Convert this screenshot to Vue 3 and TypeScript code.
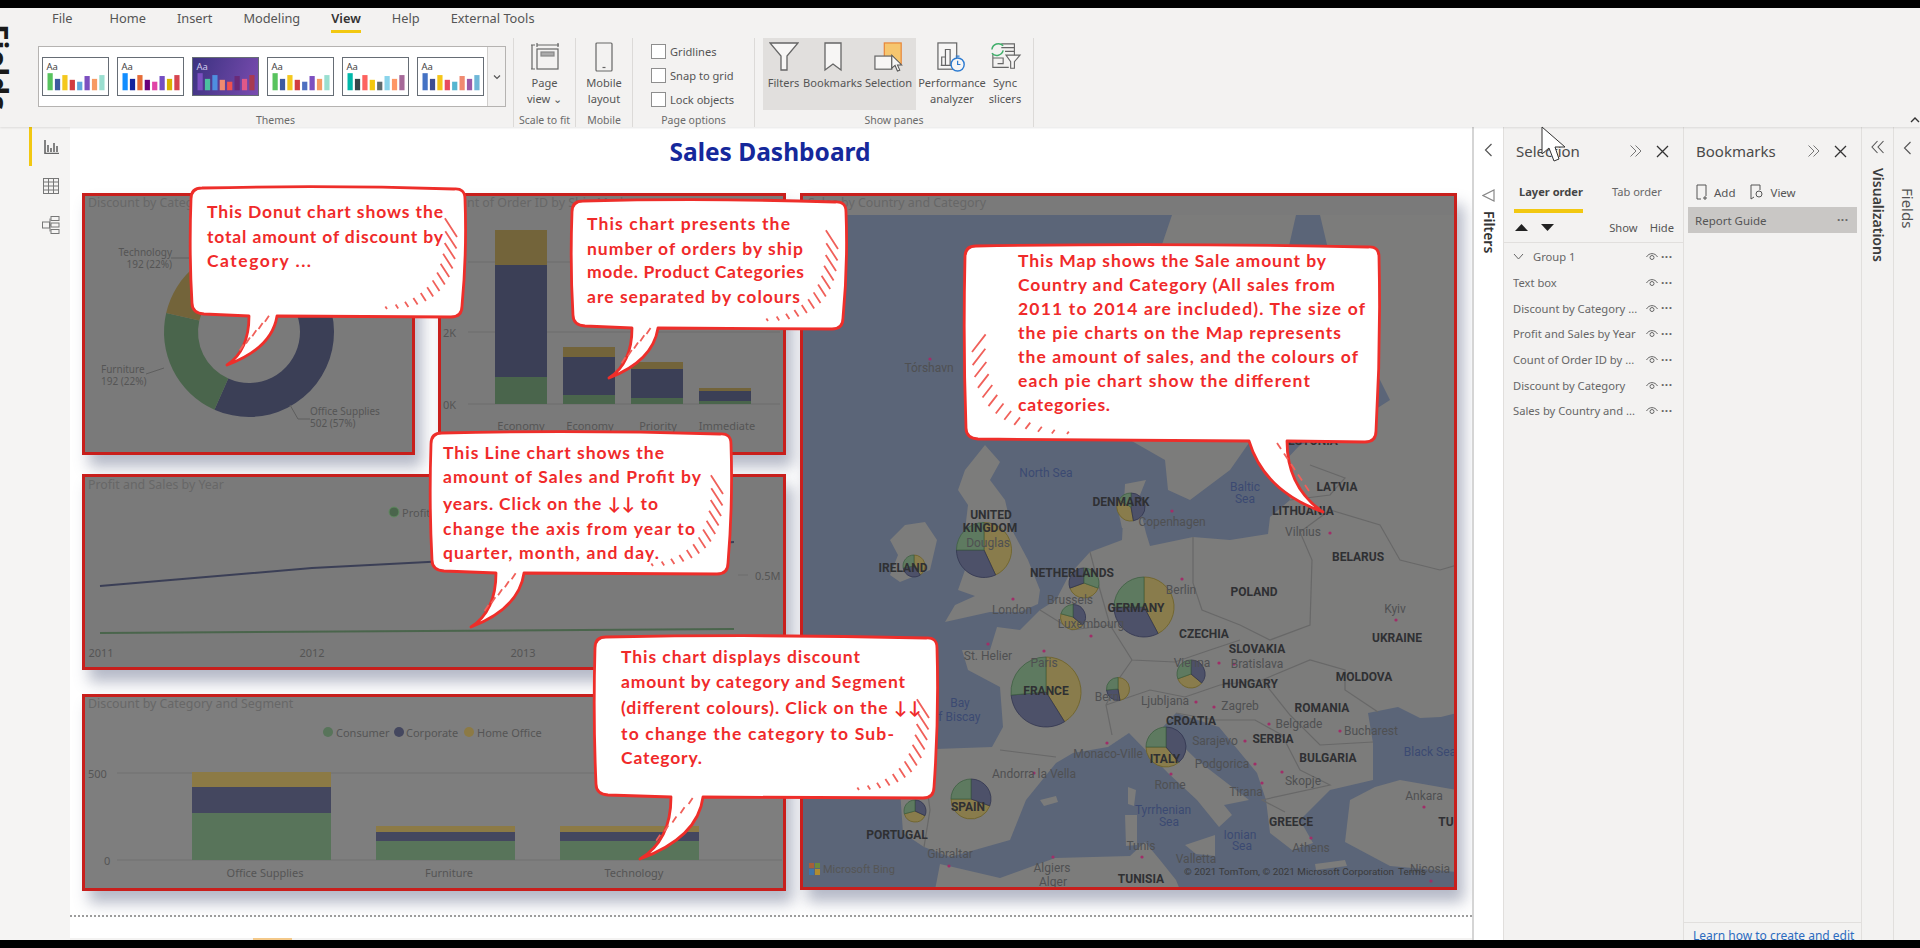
<script setup lang="ts">
interface Label { t: string; x: number; y: number; k: 'c' | 'p' | 'w'; s?: number }
interface Slice { from: number; to: number; color: string; edge: string }
interface Callout {
  x1: number; y1: number; x2: number; y2: number
  b1: number; b2: number; tx: number; ty: number
  textX: number
  hatchLeft?: boolean
  lines: { t: string; y: number; w: number }[]
}

const tabs = ['File', 'Home', 'Insert', 'Modeling', 'View', 'Help', 'External Tools']

const themes = [
  { dark: false, bars: ['#58c35e', '#3e5aa0', '#f4c81e', '#d23c40', '#5fa8dc', '#7c4fc0', '#f79a62', '#9adfd0'] },
  { dark: false, bars: ['#118dff', '#12239e', '#e66c37', '#6b007b', '#e044a7', '#744ec2', '#d9b300', '#d64550'] },
  { dark: true, bars: ['#7b4fc0', '#4cc0a0', '#4f8fe0', '#f08a70', '#f05050', '#6a2a78', '#e05888', '#a83a50'] },
  { dark: false, bars: ['#58c35e', '#3e5aa0', '#f4c81e', '#d23c40', '#4e6fc0', '#7c4fc0', '#f79a62', '#9adfd0'] },
  { dark: false, bars: ['#01b8aa', '#374649', '#fd625e', '#f2c80f', '#5f6b6d', '#8ad4eb', '#fe9666', '#a66999'] },
  { dark: false, bars: ['#4472c4', '#3f4e90', '#f5c518', '#e84a5f', '#55b5d0', '#f08a70', '#9b59a8', '#6fb7d8'] },
]
const barHeights = [18, 12, 16, 11, 9, 15, 12, 16]

const layers = [
  'Text box',
  'Discount by Category ...',
  'Profit and Sales by Year',
  'Count of Order ID by ...',
  'Discount by Category',
  'Sales by Country and ...',
]

const GOLD = '#73643a'
const NAVY = '#3b3f56'
const GREEN = '#4a654c'
const SEG_GREEN = '#58745a'

function polar(cx: number, cy: number, r: number, a: number) {
  const rad = ((a - 90) * Math.PI) / 180
  return [cx + r * Math.cos(rad), cy + r * Math.sin(rad)]
}

function wedge(cx: number, cy: number, r: number, from: number, to: number) {
  const [x0, y0] = polar(cx, cy, r, from)
  const [x1, y1] = polar(cx, cy, r, to)
  return `M${cx} ${cy}L${x0} ${y0}A${r} ${r} 0 ${to - from > 180 ? 1 : 0} 1 ${x1} ${y1}Z`
}

function ring(cx: number, cy: number, r: number, inner: number, from: number, to: number) {
  const [x0, y0] = polar(cx, cy, r, from)
  const [x1, y1] = polar(cx, cy, r, to)
  const [x2, y2] = polar(cx, cy, inner, to)
  const [x3, y3] = polar(cx, cy, inner, from)
  const large = to - from > 180 ? 1 : 0
  return `M${x0} ${y0}A${r} ${r} 0 ${large} 1 ${x1} ${y1}L${x2} ${y2}A${inner} ${inner} 0 ${large} 0 ${x3} ${y3}Z`
}

const donut = [
  { d: ring(249, 332, 85, 51, 0, 204), fill: NAVY },
  { d: ring(249, 332, 85, 51, 204, 283), fill: GREEN },
  { d: ring(249, 332, 85, 51, 283, 360), fill: GOLD },
]

const orderBars = [
  { x: 495, top: 230, gold: 265, navy: 377 },
  { x: 563, top: 347, gold: 357, navy: 395 },
  { x: 631, top: 362, gold: 369, navy: 398 },
  { x: 699, top: 388, gold: 391, navy: 401 },
]
const orderLabels = [['Economy', 521], ['Economy', 590], ['Priority', 658], ['Immediate', 727]] as const

const segBars = [
  { x: 192, top: 772, gold: 787, navy: 813 },
  { x: 376, top: 826, gold: 832, navy: 841 },
  { x: 560, top: 826, gold: 832, navy: 841 },
]

// [cx, cy, r, gold, navy, green] as clockwise ranges from 12 o'clock
const pieG = '#897c4c'
const pieN = '#4d5169'
const pieV = '#5e7a60'
const pieRaw: [number, number, number, [number, number], [number, number], [number, number]][] = [
  [984, 550, 27.5, [0, 155], [155, 270], [270, 360]],
  [914, 566, 11, [0, 145], [145, 260], [260, 360]],
  [1084, 583, 15, [110, 250], [250, 360], [0, 110]],
  [1073, 617, 12.5, [130, 285], [0, 130], [285, 360]],
  [1144, 607, 30, [0, 152], [152, 270], [270, 360]],
  [1046, 692, 35, [0, 148], [148, 265], [265, 360]],
  [1118, 689, 11.5, [0, 170], [170, 265], [265, 360]],
  [1191, 674, 14, [130, 250], [0, 130], [250, 360]],
  [1166, 747, 20, [140, 270], [0, 140], [270, 360]],
  [971, 799, 20, [110, 270], [0, 110], [270, 360]],
  [915, 811, 11, [115, 255], [0, 115], [255, 360]],
  [1131, 507, 14, [170, 300], [0, 170], [300, 360]],
]
const pies = pieRaw.map(([x, y, r, g, n, v]) => {
  const slices: Slice[] = [
    { from: g[0], to: g[1], color: pieG, edge: '#6d6125' },
    { from: n[0], to: n[1], color: pieN, edge: '#31354f' },
    { from: v[0], to: v[1], color: pieV, edge: '#3f5f42' },
  ]
  return slices.map((s) => ({ d: wedge(x, y, r, s.from, s.to), fill: s.color, edge: s.edge }))
})

const mapLabels: Label[] = [
  { t: 'Tórshavn', x: 929, y: 368, k: 'p' },
  { t: 'North Sea', x: 1046, y: 473, k: 'w' },
  { t: 'Baltic', x: 1245, y: 487, k: 'w' },
  { t: 'Sea', x: 1245, y: 499, k: 'w' },
  { t: 'LATVIA', x: 1337, y: 487, k: 'c' },
  { t: 'ESTONIA', x: 1313, y: 441, k: 'c' },
  { t: 'DENMARK', x: 1121, y: 502, k: 'c' },
  { t: 'LITHUANIA', x: 1303, y: 511, k: 'c' },
  { t: 'UNITED', x: 991, y: 515, k: 'c' },
  { t: 'KINGDOM', x: 990, y: 528, k: 'c' },
  { t: 'Douglas', x: 988, y: 543, k: 'p' },
  { t: 'Copenhagen', x: 1172, y: 522, k: 'p', s: 14 },
  { t: 'Vilnius', x: 1303, y: 532, k: 'p', s: 14 },
  { t: 'BELARUS', x: 1358, y: 557, k: 'c' },
  { t: 'IRELAND', x: 903, y: 568, k: 'c' },
  { t: 'NETHERLANDS', x: 1072, y: 573, k: 'c' },
  { t: 'Berlin', x: 1181, y: 590, k: 'p', s: 13 },
  { t: 'POLAND', x: 1254, y: 592, k: 'c' },
  { t: 'London', x: 1012, y: 610, k: 'p', s: 14 },
  { t: 'Brussels', x: 1070, y: 600, k: 'p' },
  { t: 'GERMANY', x: 1136, y: 608, k: 'c' },
  { t: 'Luxembourg', x: 1091, y: 624, k: 'p', s: 13 },
  { t: 'Kyiv', x: 1395, y: 609, k: 'p', s: 13 },
  { t: 'CZECHIA', x: 1204, y: 634, k: 'c' },
  { t: 'UKRAINE', x: 1397, y: 638, k: 'c' },
  { t: 'St. Helier', x: 988, y: 656, k: 'p', s: 13 },
  { t: 'SLOVAKIA', x: 1257, y: 649, k: 'c' },
  { t: 'Vienna', x: 1192, y: 663, k: 'p', s: 13 },
  { t: 'Bratislava', x: 1257, y: 664, k: 'p' },
  { t: 'Paris', x: 1044, y: 663, k: 'p' },
  { t: 'MOLDOVA', x: 1364, y: 677, k: 'c' },
  { t: 'HUNGARY', x: 1250, y: 684, k: 'c' },
  { t: 'FRANCE', x: 1046, y: 691, k: 'c' },
  { t: 'Bern', x: 1107, y: 697, k: 'p' },
  { t: 'Ljubljana', x: 1165, y: 701, k: 'p' },
  { t: 'Zagreb', x: 1240, y: 706, k: 'p', s: 15 },
  { t: 'ROMANIA', x: 1322, y: 708, k: 'c' },
  { t: 'Bay', x: 960, y: 703, k: 'w', s: 13 },
  { t: 'of Biscay', x: 956, y: 717, k: 'w', s: 13 },
  { t: 'CROATIA', x: 1191, y: 721, k: 'c' },
  { t: 'Belgrade', x: 1299, y: 724, k: 'p', s: 14 },
  { t: 'Bucharest', x: 1371, y: 731, k: 'p', s: 14 },
  { t: 'Sarajevo', x: 1215, y: 741, k: 'p' },
  { t: 'SERBIA', x: 1273, y: 739, k: 'c' },
  { t: 'Black Sea', x: 1430, y: 752, k: 'w' },
  { t: 'Monaco-Ville', x: 1108, y: 754, k: 'p', s: 13 },
  { t: 'BULGARIA', x: 1328, y: 758, k: 'c' },
  { t: 'ITALY', x: 1165, y: 759, k: 'c' },
  { t: 'Podgorica', x: 1222, y: 764, k: 'p' },
  { t: 'Andorra la Vella', x: 1034, y: 774, k: 'p', s: 13 },
  { t: 'Skopje', x: 1303, y: 781, k: 'p' },
  { t: 'Rome', x: 1170, y: 785, k: 'p', s: 14 },
  { t: 'Tirana', x: 1246, y: 792, k: 'p' },
  { t: 'Ankara', x: 1424, y: 796, k: 'p', s: 14 },
  { t: 'Tyrrhenian', x: 1163, y: 810, k: 'w' },
  { t: 'Sea', x: 1169, y: 822, k: 'w' },
  { t: 'SPAIN', x: 968, y: 807, k: 'c' },
  { t: 'GREECE', x: 1291, y: 822, k: 'c' },
  { t: 'TU', x: 1446, y: 822, k: 'c' },
  { t: 'PORTUGAL', x: 897, y: 835, k: 'c' },
  { t: 'Ionian', x: 1240, y: 835, k: 'w' },
  { t: 'Sea', x: 1242, y: 846, k: 'w' },
  { t: 'Tunis', x: 1141, y: 846, k: 'p', s: 13 },
  { t: 'Athens', x: 1311, y: 848, k: 'p', s: 14 },
  { t: 'Gibraltar', x: 950, y: 854, k: 'p' },
  { t: 'Valletta', x: 1196, y: 859, k: 'p' },
  { t: 'Algiers', x: 1052, y: 868, k: 'p', s: 13 },
  { t: 'Alger', x: 1053, y: 882, k: 'p', s: 13 },
  { t: 'TUNISIA', x: 1141, y: 879, k: 'c' },
  { t: 'Nicosia', x: 1430, y: 869, k: 'p', s: 13 },
]

const cityDots = [
  [930, 359], [1013, 599], [988, 644], [1044, 651], [1091, 636], [1182, 579], [1172, 511], [1330, 533], [1396, 620],
  [1219, 663], [1234, 664], [1196, 702], [1214, 707], [1269, 724], [1340, 731], [1245, 741], [1107, 743], [1034, 773],
  [1171, 774], [1255, 764], [1282, 772], [1262, 783], [1424, 807], [1311, 838], [1053, 857], [1142, 857], [949, 866],
  [1431, 881],
]

const land = [
  // continent, running down the coasts from Finland
  'M1320 215L1340 300L1390 400L1340 432L1300 445L1283 463L1290 500L1270 517L1268 534L1230 540L1193 537L1150 546L1146 533L1138 500L1146 480L1125 484L1122 540L1090 552L1069 575L1056 600L1040 610L1020 630L997 627L990 650L962 650L968 670L1000 687L1003 727L992 747L907 750L900 790L903 833L924 847L950 857L1010 840L1026 800L1056 763L1073 753L1108 747L1129 733L1168 773L1197 800L1219 827L1232 815L1224 805L1249 800L1197 760L1163 727L1176 713L1219 727L1257 773L1266 800L1270 833L1292 850L1313 843L1300 820L1330 790L1373 780L1373 743L1368 713L1398 707L1420 718L1441 717L1457 713L1457 215Z',
  // Scandinavia
  'M1172 215L1296 215L1270 330L1265 420L1230 470L1190 500L1168 490L1165 460L1130 440L1120 400L1110 340L1150 280Z',
  // Great Britain
  'M965 470L985 445L1000 462L990 480L1005 500L1012 530L1028 560L1040 590L1038 604L1020 612L990 612L945 622L955 605L975 596L958 590L965 570L985 570L975 545L965 530L968 505L958 490Z',
  // Ireland
  'M905 525L925 522L937 540L930 570L900 582L890 575L898 555L890 540Z',
  // Turkey
  'M1350 800L1375 787L1400 780L1457 790L1457 872L1390 866L1345 842Z',
  // North Africa
  'M935 890L940 864L1000 878L1055 858L1130 856L1145 842L1160 860L1176 880L1180 890Z',
  // Islands
  'M1128 787L1136 790L1134 806L1128 804Z',
  'M1125 815L1137 815L1137 845L1126 846Z',
  'M1185 845L1215 835L1215 856L1196 854Z',
  'M1040 800L1056 796L1058 802L1044 806Z',
  'M1315 864L1345 860L1347 866L1316 870Z',
  'M1118 510L1138 510L1136 530L1122 528Z',
]

const borders = [
  'M1193 537L1193 583L1202 610L1240 625L1270 640L1310 625L1312 560L1300 532',
  'M1300 532L1330 510L1380 525L1400 560L1440 570L1457 565',
  'M1290 500L1330 495L1345 478L1310 465',
  'M1090 552L1100 590L1110 625L1132 660L1175 662L1210 650L1240 640',
  'M1040 610L1072 630L1110 625',
  'M1132 660L1118 680L1106 705L1112 735',
  'M1106 705L1150 690L1185 697L1220 685L1262 680L1310 660L1345 670L1345 690L1378 712',
  'M1262 680L1290 715L1320 745L1373 742',
  'M1176 713L1215 720L1255 720L1282 735L1300 770',
  'M1000 750L1056 757',
  'M924 765L930 810L924 847',
  'M1300 770L1330 785L1262 800L1285 812',
]

function bubblePath(c: Callout) {
  const r = 11
  const { x1, y1, x2, y2, b1, b2, tx, ty } = c
  const h = ty - y2
  const right = tx > b2
  const ca = `${b2 + (right ? 0 : -5)} ${y2 + h * 0.65}`
  const cb = `${b1 + (right ? 15 : 0)} ${y2 + h * 0.7}`
  return [
    `M${x1 + r} ${y1}`,
    `Q${(x1 + x2) / 2} ${y1 - 3} ${x2 - r} ${y1 + 1}`,
    `Q${x2} ${y1} ${x2} ${y1 + r}`,
    `Q${x2 + 2} ${(y1 + y2) / 2} ${x2 - 3} ${y2 - r}`,
    `Q${x2 - 3} ${y2} ${x2 - r - 3} ${y2}`,
    `L${b2} ${y2 - 1}`,
    `Q${ca} ${tx} ${ty}`,
    `Q${cb} ${b1} ${y2 - 1}`,
    `L${x1 + r + 2} ${y2 - 3}`,
    `Q${x1 + 1} ${y2 - 4} ${x1 + 1} ${y2 - r - 3}`,
    `Q${x1 - 2} ${(y1 + y2) / 2} ${x1} ${y1 + r}`,
    `Q${x1} ${y1} ${x1 + r} ${y1}Z`,
  ].join('')
}

function hatchPath(c: Callout) {
  let d = ''
  const n = 13
  for (let i = 0; i < n; i++) {
    const t = i / (n - 1)
    const len = 3 + 19 * (1 - t)
    if (c.hatchLeft) {
      const px = c.x1 + 7 + 95 * t * t
      const py = c.y2 - 8 - 82 * (1 - t) * (1 - t)
      d += `M${px} ${py}L${px + len * 0.62} ${py - len * 0.8}`
    } else {
      const px = c.x2 - 8 - 70 * t * t
      const py = c.y2 - 8 - 72 * (1 - t) * (1 - t)
      d += `M${px} ${py}L${px - len * 0.55} ${py - len * 0.85}`
    }
  }
  // short ticks running down the tail
  const mx = (c.b1 + c.b2) / 2
  for (let i = 0; i < 5; i++) {
    const t = 0.1 + i * 0.15
    const sx = mx + (c.tx - mx) * t + (c.b2 - c.b1) * 0.22 * (1 - t)
    const sy = c.y2 + (c.ty - c.y2) * t
    d += `M${sx} ${sy}L${sx + (c.tx > c.b2 ? -4 : 4)} ${sy - 6}`
  }
  return d
}

const callouts: Callout[] = [
  {
    x1: 191, y1: 188, x2: 465, y2: 317, b1: 249, b2: 277, tx: 227, ty: 365, textX: 207,
    lines: [
      { t: 'This Donut chart shows the', y: 218, w: 236 },
      { t: 'total amount of discount by', y: 243, w: 236 },
      { t: 'Category ...', y: 267, w: 104 },
    ],
  },
  {
    x1: 572, y1: 201, x2: 846, y2: 329, b1: 632, b2: 658, tx: 609, ty: 378, textX: 587,
    lines: [
      { t: 'This chart presents the', y: 230, w: 203 },
      { t: 'number of orders by ship', y: 255, w: 216 },
      { t: 'mode. Product Categories', y: 278, w: 217 },
      { t: 'are separated by colours', y: 303, w: 213 },
    ],
  },
  {
    x1: 431, y1: 433, x2: 731, y2: 574, b1: 496, b2: 524, tx: 471, ty: 627, textX: 443,
    lines: [
      { t: 'This Line chart shows the', y: 459, w: 221 },
      { t: 'amount of Sales and Profit by', y: 483, w: 258 },
      { t: 'years. Click on the ↓↓ to', y: 510, w: 215 },
      { t: 'change the axis from year to', y: 535, w: 252 },
      { t: 'quarter, month, and day.', y: 559, w: 216 },
    ],
  },
  {
    x1: 595, y1: 637, x2: 937, y2: 798, b1: 671, b2: 703, tx: 640, ty: 859, textX: 621,
    lines: [
      { t: 'This chart displays discount', y: 663, w: 239 },
      { t: 'amount by category and Segment', y: 688, w: 284 },
      { t: '(different colours). Click on the ↓↓', y: 714, w: 300 },
      { t: 'to change the category to Sub-', y: 740, w: 273 },
      { t: 'Category.', y: 764, w: 81 },
    ],
  },
  {
    x1: 965, y1: 246, x2: 1379, y2: 442, b1: 1249, b2: 1287, tx: 1323, ty: 512, textX: 1018, hatchLeft: true,
    lines: [
      { t: 'This Map shows the Sale amount by', y: 267, w: 308 },
      { t: 'Country and Category (All sales from', y: 291, w: 317 },
      { t: '2011 to 2014 are included). The size of', y: 315, w: 347 },
      { t: 'the pie charts on the Map represents', y: 339, w: 323 },
      { t: 'the amount of sales, and the colours of', y: 363, w: 340 },
      { t: 'each pie chart show the different', y: 387, w: 292 },
      { t: 'categories.', y: 411, w: 92 },
    ],
  },
]
</script>

<template>
  <div class="page">
    <div class="black"></div>

    <span class="clipped-fields">Fields</span>

    <header class="ribbon">
      <nav class="tabs">
        <span v-for="tab in tabs" :key="tab" class="tab" :class="{ active: tab === 'View' }">{{ tab }}</span>
      </nav>
      <div class="groups">
        <section class="group themes-group">
          <div class="gallery">
            <div class="thumbs">
              <svg v-for="(theme, i) in themes" :key="i" class="thumb" viewBox="0 0 67 39" :class="{ dark: theme.dark }">
                <text x="3" y="13" class="thumb-text">Aa</text>
                <rect v-for="(c, j) in theme.bars" :key="j" :x="4 + 7.8 * j" :y="34 - barHeights[j]" width="5.5" :height="barHeights[j]" :fill="c" />
              </svg>
            </div>
            <div class="gallery-more">
              <svg width="8" height="6" viewBox="0 0 8 6"><path d="M1 1.5l3 3 3-3" fill="none" stroke="#555" stroke-width="1.2" /></svg>
            </div>
          </div>
          <div class="group-name">Themes</div>
        </section>

        <section class="group scale-group">
          <div class="tool">
            <svg width="30" height="30" viewBox="0 0 30 30" fill="none" stroke="#666" stroke-width="1.2">
              <path d="M2 3V27M1 3h4M1 27h4M7 3H29M7 1v4M28 1v4" />
              <rect x="7" y="7" width="21" height="20" />
              <rect x="11" y="10" width="13" height="4" fill="#aaa" stroke="#888" />
            </svg>
            <span>Page<br />view ⌄</span>
          </div>
          <div class="group-name">Scale to fit</div>
        </section>

        <section class="group mobile-group">
          <div class="tool">
            <svg width="20" height="30" viewBox="0 0 20 30" fill="none" stroke="#666" stroke-width="1.2">
              <rect x="2" y="1" width="16" height="28" rx="1" />
              <path d="M8.500 25.500h3" />
            </svg>
            <span>Mobile<br />layout</span>
          </div>
          <div class="group-name">Mobile</div>
        </section>

        <section class="group options-group">
          <div class="checks">
            <label class="check"><i></i>Gridlines</label>
            <label class="check"><i></i>Snap to grid</label>
            <label class="check"><i></i>Lock objects</label>
          </div>
          <div class="group-name">Page options</div>
        </section>

        <section class="group panes-group">
          <div class="pane-tools">
            <div class="hover-bg">
              <div class="tool filters-tool">
                <svg width="30" height="30" viewBox="0 0 30 30" fill="#f7f6f5" stroke="#666" stroke-width="1.3">
                  <path d="M1 1H29L18 14V28H12V14Z" />
                </svg>
                <span>Filters</span>
              </div>
              <div class="tool bookmarks-tool">
                <svg width="20" height="30" viewBox="0 0 20 30" fill="#f7f6f5" stroke="#666" stroke-width="1.3">
                  <path d="M2 1H18V28L10 22L2 28Z" />
                </svg>
                <span>Bookmarks</span>
              </div>
              <div class="tool selection-tool">
                <svg width="32" height="32" viewBox="0 0 32 32">
                  <rect x="11" y="1" width="18" height="22" fill="#f6c66f" stroke="#e8873a" stroke-width="1.3" />
                  <rect x="1" y="15" width="18" height="14" fill="#f7f6f5" stroke="#666" stroke-width="1.3" />
                  <path d="M19 14V28L22.500 25L25 31L27.500 30L25 24.500H29.500Z" fill="#f7f6f5" stroke="#555" stroke-width="1.100" />
                </svg>
                <span>Selection</span>
              </div>
            </div>
            <div class="tool perf-tool">
              <svg width="32" height="32" viewBox="0 0 32 32" fill="none" stroke="#666" stroke-width="1.3">
                <rect x="1" y="1" width="20" height="28" fill="#f7f6f5" />
                <path d="M5 25V16H9V25M9 25V8H14V25M4 25H17" />
                <circle cx="22" cy="24" r="7" fill="#f7f6f5" stroke="#2c7bd1" stroke-width="1.500" />
                <path d="M22 20v4h3M20 15h4" stroke="#2c7bd1" stroke-width="1.300" />
              </svg>
              <span>Performance<br />analyzer</span>
            </div>
            <div class="tool sync-tool">
              <svg width="33" height="32" viewBox="0 0 33 32" fill="none" stroke="#666" stroke-width="1.2">
                <path d="M12 2H26V16M12 6H26M16 10H26" />
                <path d="M3 13V27H20M3 17H14V23H8" />
                <path d="M17 14H32L26 21V28H22V21Z" fill="#f7f6f5" />
                <path d="M2 8a7 7 0 0 1 12-4M14 9a7 7 0 0 1-12 3" stroke="#3fae6a" stroke-width="1.600" />
              </svg>
              <span>Sync<br />slicers</span>
            </div>
          </div>
          <div class="group-name">Show panes</div>
        </section>
      </div>
      <svg class="collapse-ribbon" width="10" height="6" viewBox="0 0 10 6"><path d="M1 5l4-4 4 4" fill="none" stroke="#333" stroke-width="1.400" /></svg>
    </header>

    <main class="body">
      <aside class="side-nav">
        <div class="nav-item current">
          <svg width="15" height="14" viewBox="0 0 15 14" fill="none" stroke="#666" stroke-width="1.600">
            <path d="M1 0V13.500H15M4 12V5M7 12V8M10 12V3M13 12V6" />
          </svg>
        </div>
        <div class="nav-item">
          <svg width="16" height="16" viewBox="0 0 16 16" fill="none" stroke="#777" stroke-width="1">
            <rect x="0.500" y="0.500" width="15" height="15" />
            <path d="M0.500 4h15M0.500 8h15M0.500 12h15M5.500 0.500v15M10.500 0.500v15" />
          </svg>
        </div>
        <div class="nav-item">
          <svg width="18" height="18" viewBox="0 0 18 18" fill="none" stroke="#777" stroke-width="1">
            <rect x="9" y="0.500" width="8" height="4" />
            <rect x="0.500" y="6" width="7" height="6" />
            <rect x="9" y="7" width="8" height="4" />
            <rect x="9" y="13.500" width="8" height="4" />
            <path d="M7.500 9H9M8 2.500V15.500" />
          </svg>
        </div>
      </aside>

      <div class="canvas">
        <h1 class="report-title">Sales Dashboard</h1>

        <div class="dashboard">
          <div class="left-col">
            <div class="top-row">
              <section class="panel donut-panel">
                <svg viewBox="85 196 327 256" class="chart">
                  <text x="88" y="207" class="title-text">Discount by Category</text>
                  <path v-for="(s, i) in donut" :key="i" :d="s.d" :fill="s.fill" />
                  <path d="M171 258h20M146 374l18-6M290 405l8 14h12" fill="none" stroke="#5e5e5e" stroke-width="1" />
                  <text x="172" y="256" text-anchor="end" class="small-label">Technology</text>
                  <text x="172" y="268" text-anchor="end" class="small-label">192 (22%)</text>
                  <text x="101" y="373" class="small-label">Furniture</text>
                  <text x="101" y="385" class="small-label">192 (22%)</text>
                  <text x="310" y="415" class="small-label">Office Supplies</text>
                  <text x="310" y="427" class="small-label">502 (57%)</text>
                </svg>
              </section>

              <section class="panel bar-panel">
                <svg viewBox="441 196 342 256" class="chart">
                  <text x="444" y="207" class="title-text">Count of Order ID by Ship Mode</text>
                  <path d="M468 262H780M468 332H780M468 404H780" stroke="#6d6d6d" stroke-width="1" />
                  <text x="443" y="337" class="data-label">2K</text>
                  <text x="443" y="409" class="data-label">0K</text>
                  <g v-for="b in orderBars" :key="b.x">
                    <rect :x="b.x" :y="b.top" width="52" :height="b.gold - b.top" :fill="GOLD" />
                    <rect :x="b.x" :y="b.gold" width="52" :height="b.navy - b.gold" :fill="NAVY" />
                    <rect :x="b.x" :y="b.navy" width="52" :height="404 - b.navy" :fill="GREEN" />
                  </g>
                  <text v-for="l in orderLabels" :key="l[1]" :x="l[1]" y="430" text-anchor="middle" class="data-label">{{ l[0] }}</text>
                </svg>
              </section>
            </div>

            <section class="panel line-panel">
              <svg viewBox="85 477 698 190" class="chart">
                <text x="88" y="489" class="title-text">Profit and Sales by Year</text>
                <circle cx="394" cy="512" r="5" :fill="GREEN" stroke="#5f8a5f" />
                <text x="402" y="517" class="data-label">Profit</text>
                <path d="M100 586L312 568L428 562L734 542" fill="none" :stroke="NAVY" stroke-width="2" />
                <path d="M100 633L734 629" fill="none" :stroke="GREEN" stroke-width="2" />
                <text x="101" y="657" text-anchor="middle" class="data-label">2011</text>
                <text x="312" y="657" text-anchor="middle" class="data-label">2012</text>
                <text x="523" y="657" text-anchor="middle" class="data-label">2013</text>
                <text x="734" y="657" text-anchor="middle" class="data-label">2014</text>
                <path d="M738 575h10" stroke="#6d6d6d" />
                <text x="755" y="580" class="data-label">0.5M</text>
              </svg>
            </section>

            <section class="panel seg-panel">
              <svg viewBox="85 697 698 191" class="chart">
                <text x="88" y="708" class="title-text">Discount by Category and Segment</text>
                <circle cx="328" cy="732" r="5" :fill="SEG_GREEN" />
                <text x="336" y="737" class="data-label">Consumer</text>
                <circle cx="399" cy="732" r="5" fill="#44475f" />
                <text x="406" y="737" class="data-label">Corporate</text>
                <circle cx="469" cy="732" r="5" fill="#8c7a45" />
                <text x="477" y="737" class="data-label">Home Office</text>
                <path d="M117 773H782M117 860H782" stroke="#707070" stroke-width="1" />
                <text x="88" y="778" class="data-label">500</text>
                <text x="104" y="865" class="data-label">0</text>
                <g v-for="b in segBars" :key="b.x">
                  <rect :x="b.x" :y="b.top" width="139" :height="b.gold - b.top" fill="#8c7a45" />
                  <rect :x="b.x" :y="b.gold" width="139" :height="b.navy - b.gold" fill="#44475f" />
                  <rect :x="b.x" :y="b.navy" width="139" :height="860 - b.navy" :fill="SEG_GREEN" />
                </g>
                <text x="265" y="877" text-anchor="middle" class="data-label">Office Supplies</text>
                <text x="449" y="877" text-anchor="middle" class="data-label">Furniture</text>
                <text x="634" y="877" text-anchor="middle" class="data-label">Technology</text>
              </svg>
            </section>
          </div>

          <section class="panel map-panel">
            <svg viewBox="803 196 651 691" class="chart">
              <rect x="803" y="215" width="651" height="672" fill="#5b6578" />
              <text x="808" y="207" class="title-text">Sales by Country and Category</text>
              <path v-for="(d, i) in land" :key="i" :d="d" fill="#7c7c7b" />
              <path v-for="(d, i) in borders" :key="'b' + i" :d="d" fill="none" stroke="#686868" stroke-width="1.200" />
              <circle v-for="(p, i) in cityDots" :key="'d' + i" :cx="p[0]" :cy="p[1]" r="1.600" fill="#a02e68" />
              <template v-for="(pie, i) in pies" :key="'p' + i">
                <path v-for="(s, j) in pie" :key="j" :d="s.d" :fill="s.fill" :stroke="s.edge" stroke-width="0.800" />
              </template>
              <text
                v-for="l in mapLabels"
                :key="l.t + l.x"
                :x="l.x"
                :y="l.y + 4"
                text-anchor="middle"
                class="map-label"
                :class="'k-' + l.k"
                :font-size="l.s"
              >{{ l.t }}</text>
              <g>
                <rect x="809" y="863" width="5" height="5" fill="#a5603a" />
                <rect x="815" y="863" width="5" height="5" fill="#6d8a3c" />
                <rect x="809" y="869" width="5" height="6" fill="#3f74a8" />
                <rect x="815" y="869" width="5" height="6" fill="#b08c30" />
              </g>
              <text x="823" y="873" class="bing">Microsoft Bing</text>
              <text x="1184" y="875" class="copyright">© 2021 TomTom, © 2021 Microsoft Corporation</text>
              <text x="1398" y="875" class="copyright">Terms</text>
            </svg>
          </section>
        </div>

        <div class="page-end"></div>
        <div class="page-tabs"><i></i></div>

        <svg class="callouts" viewBox="70 127 1402 813">
          <g v-for="(c, i) in callouts" :key="i">
            <path :d="bubblePath(c)" fill="#fff" stroke="#ee2e2a" stroke-width="2.800" stroke-linejoin="round" />
            <path :d="hatchPath(c)" fill="none" stroke="#f0605a" stroke-width="1.800" />
            <text
              v-for="line in c.lines"
              :key="line.t"
              :x="c.textX"
              :y="line.y"
              :textLength="line.w"
              lengthAdjust="spacing"
              class="callout-text"
            >{{ line.t }}</text>
          </g>
        </svg>
      </div>

      <aside class="collapsed-pane filters-pane">
        <svg class="chev" width="9" height="14" viewBox="0 0 9 14"><path d="M7.500 1L1.500 7l6 6" fill="none" stroke="#555" stroke-width="1.200" /></svg>
        <svg class="pane-funnel" width="13" height="13" viewBox="0 0 13 13"><path d="M12 1V12L1 6.500Z" fill="none" stroke="#888" stroke-width="1.200" /></svg>
        <span class="vertical filters-label">Filters</span>
      </aside>

      <aside class="pane selection-pane">
        <div class="pane-head">
          <span class="pane-title">Selection</span>
          <svg width="14" height="14" viewBox="0 0 14 14"><path d="M1.500 1.500L7 7l-5.500 5.500M6.500 1.500L12 7l-5.500 5.500" fill="none" stroke="#777" stroke-width="1" /></svg>
          <svg class="close" width="13" height="13" viewBox="0 0 13 13"><path d="M1 1l11 11M12 1L1 12" stroke="#333" stroke-width="1.300" /></svg>
        </div>
        <div class="sel-tabs">
          <span class="sel-tab on">Layer order</span>
          <span class="sel-tab">Tab order</span>
        </div>
        <div class="sel-tools">
          <svg width="13" height="7" viewBox="0 0 13 7"><path d="M6.500 0L13 7H0Z" fill="#222" /></svg>
          <svg class="down" width="13" height="7" viewBox="0 0 13 7"><path d="M0 0H13L6.500 7Z" fill="#222" /></svg>
          <span class="show">Show</span>
          <span class="hide">Hide</span>
        </div>
        <div class="layer-row group-row">
          <svg width="11" height="7" viewBox="0 0 11 7"><path d="M1 1l4.500 5L10 1" fill="none" stroke="#666" stroke-width="1" /></svg>
          <span class="layer-name">Group 1</span>
          <svg class="eye" width="12" height="9" viewBox="0 0 12 9"><path d="M0.500 5C3 0.500 9 0.500 11.500 5" fill="none" stroke="#666" /><circle cx="6" cy="5.500" r="2" fill="none" stroke="#666" /></svg>
          <span class="dots">···</span>
        </div>
        <div v-for="layer in layers" :key="layer" class="layer-row">
          <span class="layer-name">{{ layer }}</span>
          <svg class="eye" width="12" height="9" viewBox="0 0 12 9"><path d="M0.500 5C3 0.500 9 0.500 11.500 5" fill="none" stroke="#666" /><circle cx="6" cy="5.500" r="2" fill="none" stroke="#666" /></svg>
          <span class="dots">···</span>
        </div>
      </aside>

      <aside class="pane bookmarks-pane">
        <div class="pane-head">
          <span class="pane-title">Bookmarks</span>
          <svg width="14" height="14" viewBox="0 0 14 14"><path d="M1.500 1.500L7 7l-5.500 5.500M6.500 1.500L12 7l-5.500 5.500" fill="none" stroke="#777" stroke-width="1" /></svg>
          <svg class="close" width="13" height="13" viewBox="0 0 13 13"><path d="M1 1l11 11M12 1L1 12" stroke="#333" stroke-width="1.300" /></svg>
        </div>
        <div class="bm-tools">
          <svg width="11" height="16" viewBox="0 0 11 16"><path d="M1 15V1H10V12M5 15L1 15M7 14h4M9 12v4" fill="none" stroke="#555" stroke-width="1" /></svg>
          <span>Add</span>
          <svg class="view-icon" width="14" height="16" viewBox="0 0 14 16"><path d="M1 15V1H10V6M1 15l3-2" fill="none" stroke="#555" stroke-width="1" /><circle cx="9" cy="10" r="3" fill="none" stroke="#555" /></svg>
          <span>View</span>
        </div>
        <div class="bm-row">
          <span>Report Guide</span>
          <span class="dots">···</span>
        </div>
        <div class="bm-foot"><a>Learn how to create and edit</a></div>
      </aside>

      <aside class="collapsed-pane viz-pane">
        <svg class="chev" width="14" height="14" viewBox="0 0 14 14"><path d="M6.500 1L1 7l5.500 6M12.500 1L7 7l5.500 6" fill="none" stroke="#555" stroke-width="1.100" /></svg>
        <span class="vertical viz-label">Visualizations</span>
      </aside>
      <aside class="collapsed-pane fields-pane">
        <svg class="chev" width="9" height="14" viewBox="0 0 9 14"><path d="M7.500 1L1.500 7l6 6" fill="none" stroke="#555" stroke-width="1.100" /></svg>
        <span class="vertical fields-label">Fields</span>
      </aside>
    </main>

    <div class="black"></div>

    <svg class="cursor" width="26" height="38" viewBox="0 0 26 38">
      <path d="M1 1V28L8 22L13 35L18 33L14 21H24Z" fill="#fff" stroke="#333" stroke-width="1" />
    </svg>
  </div>
</template>

<style>
html, body { margin: 0; background: #fff; }
</style>

<style scoped>
.page {
  position: relative;
  width: 1920px;
  height: 948px;
  overflow: hidden;
  display: flex;
  flex-direction: column;
  font-family: "Noto Sans", "Open Sans", sans-serif;
  color: #555;
}

.black { height: 8px; background: #000; flex: none; }

.clipped-fields {
  position: absolute;
  left: -18px;
  top: 24px;
  z-index: 3;
  writing-mode: vertical-rl;
  font-size: 30px;
  line-height: 1;
  font-weight: 700;
  color: #1a1a1a;
}

.ribbon {
  position: relative;
  flex: none;
  height: 119px;
  background: #f3f2f1;
  box-shadow: 0 1px 2px rgba(0, 0, 0, 0.1);
  z-index: 2;
}

.tabs {
  height: 30px;
  display: flex;
  gap: 31px;
  padding-left: 52px;
  align-items: center;
  box-sizing: border-box;
  padding-bottom: 10px;
  font-size: 12.8px;
  color: #555;
}
.tab { position: relative; }
.tab:first-child { margin-right: 6px; }
.tab.active { font-weight: 600; color: #333; }
.tab.active::after {
  content: "";
  position: absolute;
  left: 0;
  right: 0;
  bottom: -6px;
  height: 3px;
  background: #f2c811;
}

.groups { display: flex; height: 89px; padding-left: 38px; }
.group {
  box-sizing: border-box;
  border-right: 1px solid #dcdad8;
  display: flex;
  flex-direction: column;
  justify-content: space-between;
}
.group-name { text-align: center; font-size: 10.5px; color: #6a6a6a; line-height: 14px; }

.themes-group { width: 476px; padding-top: 8px; border-right: 1px solid #dcdad8; }
.scale-group { width: 62px; }
.mobile-group { width: 57px; }
.options-group { width: 122px; }
.panes-group { width: 279px; }

.gallery {
  width: 468px;
  height: 61px;
  box-sizing: border-box;
  border: 1px solid #b5b3b1;
  background: #fff;
  display: flex;
}
.thumbs { flex: 1; display: flex; gap: 8px; padding: 10px 0 0 3px; }
.thumb {
  width: 67px;
  height: 39px;
  box-sizing: border-box;
  border: 1px solid #666d75;
  background: #fff;
}
.thumb.dark { background: linear-gradient(110deg, #3b3280, #7a4cb0); }
.thumb-text { font-size: 10px; fill: #444; }
.thumb.dark .thumb-text { fill: #cfc9ea; }
.gallery-more {
  width: 17px;
  background: #f3f2f1;
  border-left: 1px solid #d0cecc;
  display: flex;
  align-items: center;
  justify-content: center;
}

.tool {
  display: flex;
  flex-direction: column;
  align-items: center;
  font-size: 11.1px;
  line-height: 16px;
  color: #555;
  text-align: center;
  padding-top: 4px;
}
.tool svg { height: 30px; display: block; margin-bottom: 3px; }

.checks { padding: 1px 0 0 18px; }
.check {
  display: flex;
  align-items: center;
  gap: 4px;
  height: 24px;
  font-size: 11.1px;
  color: #555;
}
.check i {
  width: 15px;
  height: 15px;
  box-sizing: border-box;
  border: 1px solid #8e8e8e;
  background: #fff;
}

.pane-tools { display: flex; padding-left: 8px; }
.hover-bg {
  display: flex;
  width: 153px;
  height: 72px;
  background: #e1dfdd;
  flex: none;
}
.filters-tool { width: 41px; }
.bookmarks-tool { width: 57px; }
.selection-tool { width: 55px; }
.perf-tool { width: 72px; }
.sync-tool { width: 36px; margin-left: -1px; }

.collapse-ribbon { position: absolute; right: 0; bottom: 4px; }

.body { flex: 1; display: flex; min-height: 0; }

.side-nav { width: 70px; flex: none; box-sizing: border-box; padding-left: 29px; background: #f5f4f3; }
.nav-item {
  height: 39px;
  display: flex;
  align-items: center;
  justify-content: center;
  box-sizing: border-box;
  border-left: 3px solid transparent;
}
.nav-item.current { border-left-color: #f2c811; }

.canvas {
  position: relative;
  width: 1402px;
  flex: none;
  background: #fff;
  display: flex;
  flex-direction: column;
}
.report-title {
  margin: 0;
  height: 66px;
  box-sizing: border-box;
  padding: 10px 2px 0 0;
  text-align: center;
  font-size: 24.5px;
  line-height: 30px;
  font-weight: 700;
  color: #15289b;
}

.dashboard { display: flex; height: 697px; padding-left: 12px; gap: 14px; flex: none; }
.left-col { width: 704px; display: flex; flex-direction: column; }
.top-row { display: flex; justify-content: space-between; height: 262px; }
.panel {
  box-sizing: border-box;
  border: 3px solid #c81f1c;
  background: #7a7a7a;
  box-shadow: 7px 12px 14px rgba(90, 100, 130, 0.45);
}
.donut-panel { width: 333px; }
.bar-panel { width: 348px; }
.line-panel { height: 196px; margin-top: 19px; }
.seg-panel { height: 197px; margin-top: 24px; background: #7e7e7e; }
.map-panel { width: 657px; }
.chart { display: block; width: 100%; height: 100%; }

.title-text { font-size: 12.4px; fill: #676767; }
.data-label { font-size: 11px; fill: #555; }
.small-label { font-size: 10px; fill: #555; }

.map-label { font-family: Roboto, sans-serif; }
.k-c { font-size: 12px; font-weight: 700; fill: #2f3033; }
.k-p { font-size: 12px; fill: #4f5052; }
.k-w { font-size: 12px; fill: #3b4a72; }
.bing { font-size: 11px; fill: #555; font-family: Roboto, sans-serif; }
.copyright { font-size: 9.9px; fill: #3a3a3a; font-family: Roboto, sans-serif; }

.page-end { margin: 25px 0 0 0; border-top: 2px dotted #9c9c9c; }
.page-tabs { margin-top: auto; height: 2px; background: #f3f2f1; }
.page-tabs i { display: block; width: 39px; height: 2px; margin-left: 183px; background: #f4c98a; }

.callouts { position: absolute; left: 0; top: 0; width: 1402px; height: 813px; pointer-events: none; }
.callout-text { font-family: Lato, "Noto Sans", sans-serif; font-size: 17.5px; font-weight: 700; fill: #f02a2a; }

.pane, .collapsed-pane {
  box-sizing: border-box;
  background: #f3f2f1;
  border-left: 1px solid #e1dfdd;
  flex: none;
  position: relative;
}
.filters-pane { width: 31px; background: #fff; border-left: 2px solid #d5d5d5; display: flex; flex-direction: column; align-items: center; padding-top: 16px; }
.pane-funnel { margin-top: 32px; }
.filters-label { margin-top: 9px; font-size: 14px; font-weight: 600; color: #333; }
.vertical { writing-mode: vertical-rl; line-height: 1; }
.selection-pane { width: 180px; }
.bookmarks-pane { width: 178px; display: flex; flex-direction: column; }

.pane-head {
  display: flex;
  align-items: center;
  height: 50px;
  padding: 0 14px 2px 12px;
  box-sizing: border-box;
  gap: 13px;
}
.pane-title { flex: 1; font-size: 15px; color: #4a4a4a; }

.sel-tabs {
  display: flex;
  height: 36px;
  padding-left: 10px;
  font-size: 11.1px;
  color: #666;
  gap: 0;
  box-sizing: border-box;
}
.sel-tab { width: 100px; padding: 7px 0 0 5px; box-sizing: border-box; white-space: nowrap; }
.sel-tab.on {
  width: 71px;
  margin-right: 24px;
  border-bottom: 4px solid #f2c811;
  font-weight: 700;
  color: #444;
}
.sel-tools {
  display: flex;
  align-items: center;
  height: 29px;
  padding: 0 9px 0 11px;
  border-bottom: 1px solid #e1dfdd;
  font-size: 11.2px;
  color: #555;
}
.sel-tools .down { margin-left: 13px; }
.sel-tools .show { margin-left: auto; }
.sel-tools .hide { margin-left: 12px; }

.layer-row {
  display: flex;
  align-items: center;
  height: 25.7px;
  padding-left: 9px;
  font-size: 11.2px;
  color: #666;
}
.group-row { margin-top: 1px; }
.group-row .layer-name { margin-left: 9px; }
.layer-name { flex: 1; white-space: nowrap; overflow: hidden; }
.eye { margin: 0 3px 0 0; }
.dots { width: 14px; margin-right: 8px; font-size: 12px; font-weight: 700; letter-spacing: 0.5px; color: #666; line-height: 1; }

.bm-tools {
  display: flex;
  align-items: center;
  height: 30px;
  padding-left: 12px;
  gap: 7px;
  font-size: 11.5px;
  color: #555;
}
.bm-tools .view-icon { margin-left: 7px; }
.bm-row {
  margin: 0 4px;
  height: 26px;
  display: flex;
  align-items: center;
  justify-content: space-between;
  padding: 0 0 0 7px;
  background: #c9c7c5;
  font-size: 11.5px;
  color: #555;
}
.bm-row .dots { margin-right: 6px; }
.bm-foot {
  margin-top: auto;
  height: 18px;
  overflow: hidden;
  border-top: 1px solid #e1dfdd;
  padding: 6px 0 0 9px;
  box-sizing: border-box;
}
.bm-foot a { display: block; font-size: 12px; line-height: 14px; color: #2d6cc0; text-decoration: underline; white-space: nowrap; }

.viz-pane { width: 32px; display: flex; flex-direction: column; align-items: center; padding-top: 13px; }
.viz-label { margin-top: 14px; font-size: 14px; color: #3c3c3c; font-weight: 600; }
.fields-pane { width: 27px; display: flex; flex-direction: column; align-items: center; padding-top: 14px; }
.fields-label { margin-top: 33px; font-size: 15px; color: #555; }

.cursor { position: absolute; left: 1541px; top: 126px; z-index: 5; }
</style>
